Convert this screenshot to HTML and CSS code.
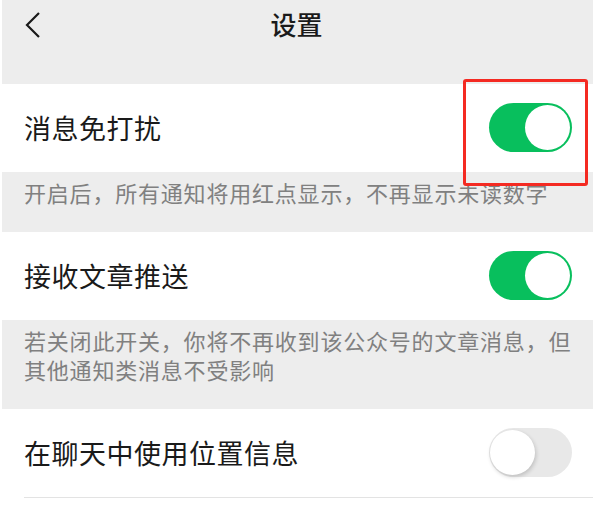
FILE: index.html
```html
<!DOCTYPE html>
<html lang="zh-CN">
<head>
<meta charset="utf-8">
<title>设置</title>
<link rel="stylesheet" href="styles.css">
</head>
<body>
<div class="page">
  <header class="header">
    <div class="nav">
      <svg class="back" width="18" height="28" viewBox="0 0 18 28"><polyline points="15,2 3,14 15,26" fill="none" stroke="#1a1a1a" stroke-width="2.2"/></svg>
      <div class="title">设置</div>
    </div>
  </header>
  <div class="row">
    <span class="label">消息免打扰</span>
    <span class="toggle on"><span class="knob"></span></span>
  </div>
  <div class="note">开启后，所有通知将用红点显示，不再显示未读数字</div>
  <div class="row">
    <span class="label">接收文章推送</span>
    <span class="toggle on"><span class="knob"></span></span>
  </div>
  <div class="note">若关闭此开关，你将不再收到该公众号的文章消息，但<br>其他通知类消息不受影响</div>
  <div class="row last">
    <span class="label">在聊天中使用位置信息</span>
    <span class="toggle off"><span class="knob"></span></span>
  </div>
  <div class="highlight"></div>
</div>
</body>
</html>
```

FILE: styles.css
```css
* { box-sizing: border-box; }
html, body { margin: 0; padding: 0; background: #ffffff; }
body {
  font-family: "Noto Sans CJK SC", "Noto Sans", sans-serif;
  color: #1a1a1a;
}
.page {
  position: relative;
  width: 591px;
  margin-left: 2px;
  background: #ffffff;
}
.header {
  height: 84px;
  background: #ededed;
}
.nav {
  position: relative;
  height: 46px;
  display: flex;
  align-items: center;
  justify-content: center;
}
.back {
  position: absolute;
  left: 22px;
  top: 11px;
}
.title {
  font-size: 26px;
  font-weight: 500;
  color: #1a1a1a;
  margin-left: -2px;
}
.row {
  height: 88px;
  display: flex;
  align-items: center;
  justify-content: space-between;
  padding: 0 21px 2px 22px;
  background: #fff;
}
.row.last {
  position: relative;
  height: 89px;
}
.row.last::after {
  content: "";
  position: absolute;
  left: 22px;
  right: 0;
  bottom: 0;
  height: 1px;
  background: #e3e3e3;
}
.label {
  font-size: 27px;
  color: #1a1a1a;
  letter-spacing: 0.5px;
}
.note {
  background: #ededed;
  color: #808080;
  font-size: 22px;
  line-height: 29px;
  padding: 6px 4px 25px 22px;
  letter-spacing: 0.8px;
  white-space: nowrap;
}
.toggle {
  position: relative;
  width: 83px;
  height: 49px;
  border-radius: 25px;
  display: block;
}
.toggle.on { background: #08bf5d; }
.toggle.off { background: #e8e8e8; }
.knob {
  position: absolute;
  top: 2px;
  width: 45px;
  height: 45px;
  border-radius: 50%;
  background: #fff;
}
.toggle.on .knob { right: 2px; }
.toggle.off .knob {
  left: 1px;
  box-shadow: 1px 2px 4px rgba(0,0,0,0.18);
}
.highlight {
  position: absolute;
  left: 461px;
  top: 79px;
  width: 125px;
  height: 107px;
  border: 3px solid #f42a22;
  border-radius: 3px;
}
```
